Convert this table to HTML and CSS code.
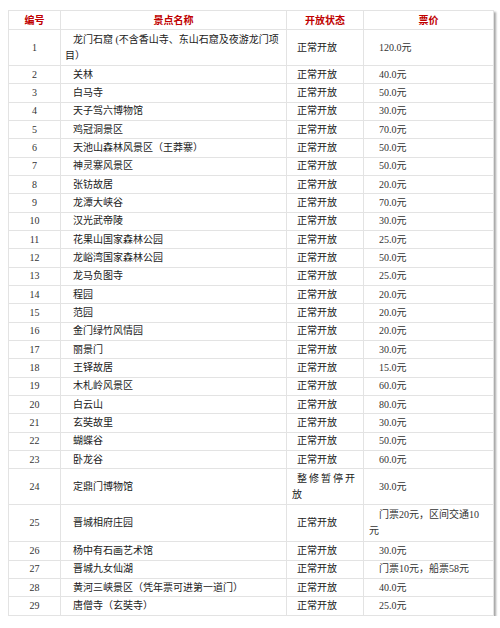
FILE: index.html
```html
<!DOCTYPE html>
<html lang="zh-CN">
<head>
<meta charset="utf-8">
<link rel="stylesheet" href="styles.css">
</head>
<body>
<table class="tickets">
<colgroup><col class="c1"><col class="c2"><col class="c3"><col class="c4"></colgroup>
<thead>
<tr class="head"><th>编号</th><th>景点名称</th><th>开放状态</th><th>票价</th></tr>
</thead>
<tbody>
<tr class="d1"><td class="num">1</td><td class="name">龙门石窟 (不含香山寺、东山石窟及夜游龙门项<br>目）</td><td class="st">正常开放</td><td class="pr">120.0元</td></tr>
<tr><td class="num">2</td><td class="name">关林</td><td class="st">正常开放</td><td class="pr">40.0元</td></tr>
<tr><td class="num">3</td><td class="name">白马寺</td><td class="st">正常开放</td><td class="pr">50.0元</td></tr>
<tr><td class="num">4</td><td class="name">天子驾六博物馆</td><td class="st">正常开放</td><td class="pr">30.0元</td></tr>
<tr><td class="num">5</td><td class="name">鸡冠洞景区</td><td class="st">正常开放</td><td class="pr">70.0元</td></tr>
<tr><td class="num">6</td><td class="name">天池山森林风景区（王莽寨）</td><td class="st">正常开放</td><td class="pr">50.0元</td></tr>
<tr><td class="num">7</td><td class="name">神灵寨风景区</td><td class="st">正常开放</td><td class="pr">50.0元</td></tr>
<tr><td class="num">8</td><td class="name">张钫故居</td><td class="st">正常开放</td><td class="pr">20.0元</td></tr>
<tr><td class="num">9</td><td class="name">龙潭大峡谷</td><td class="st">正常开放</td><td class="pr">70.0元</td></tr>
<tr><td class="num">10</td><td class="name">汉光武帝陵</td><td class="st">正常开放</td><td class="pr">30.0元</td></tr>
<tr><td class="num">11</td><td class="name">花果山国家森林公园</td><td class="st">正常开放</td><td class="pr">25.0元</td></tr>
<tr><td class="num">12</td><td class="name">龙峪湾国家森林公园</td><td class="st">正常开放</td><td class="pr">50.0元</td></tr>
<tr><td class="num">13</td><td class="name">龙马负图寺</td><td class="st">正常开放</td><td class="pr">25.0元</td></tr>
<tr><td class="num">14</td><td class="name">程园</td><td class="st">正常开放</td><td class="pr">20.0元</td></tr>
<tr><td class="num">15</td><td class="name">范园</td><td class="st">正常开放</td><td class="pr">20.0元</td></tr>
<tr><td class="num">16</td><td class="name">金门绿竹风情园</td><td class="st">正常开放</td><td class="pr">20.0元</td></tr>
<tr><td class="num">17</td><td class="name">丽景门</td><td class="st">正常开放</td><td class="pr">30.0元</td></tr>
<tr><td class="num">18</td><td class="name">王铎故居</td><td class="st">正常开放</td><td class="pr">15.0元</td></tr>
<tr><td class="num">19</td><td class="name">木札岭风景区</td><td class="st">正常开放</td><td class="pr">60.0元</td></tr>
<tr><td class="num">20</td><td class="name">白云山</td><td class="st">正常开放</td><td class="pr">80.0元</td></tr>
<tr><td class="num">21</td><td class="name">玄奘故里</td><td class="st">正常开放</td><td class="pr">30.0元</td></tr>
<tr><td class="num">22</td><td class="name">蝴蝶谷</td><td class="st">正常开放</td><td class="pr">50.0元</td></tr>
<tr><td class="num">23</td><td class="name">卧龙谷</td><td class="st">正常开放</td><td class="pr">60.0元</td></tr>
<tr class="d2"><td class="num">24</td><td class="name">定鼎门博物馆</td><td class="st">整修暂停开放</td><td class="pr">30.0元</td></tr>
<tr class="d3"><td class="num">25</td><td class="name">晋城相府庄园</td><td class="st">正常开放</td><td class="pr">门票20元，区间交通10元</td></tr>
<tr><td class="num">26</td><td class="name">杨中有石画艺术馆</td><td class="st">正常开放</td><td class="pr">30.0元</td></tr>
<tr><td class="num">27</td><td class="name">晋城九女仙湖</td><td class="st">正常开放</td><td class="pr">门票10元，船票58元</td></tr>
<tr><td class="num">28</td><td class="name">黄河三峡景区（凭年票可进第一道门）</td><td class="st">正常开放</td><td class="pr">40.0元</td></tr>
<tr><td class="num">29</td><td class="name">唐僧寺（玄奘寺）</td><td class="st">正常开放</td><td class="pr">25.0元</td></tr>
</tbody>
</table>
</body>
</html>
```
FILE: styles.css
```css
html, body {
  margin: 0;
  padding: 0;
  background: #ffffff;
}
body {
  padding: 10px 0 0 8px;
  font-family: "Liberation Serif", "Noto Sans CJK SC", serif;
  font-size: 10px;
  color: #1a1a1a;
}
.tickets {
  border-collapse: collapse;
  table-layout: fixed;
  width: 485px;
  border: 1px solid #d4d4d4;
  box-shadow: 2px 2px 2px rgba(0, 0, 0, 0.35);
}
.c1 { width: 52px; }
.c2 { width: 226px; }
.c3 { width: 77px; }
.c4 { width: 130px; }
.tickets th,
.tickets td {
  border: 1px solid #e3e3e3;
  padding: 0 4px;
  line-height: 16px;
  vertical-align: middle;
  overflow: hidden;
}
.tickets tr { height: 18.33px; }
.tickets tr.head { height: 19px; }
.tickets tr.d1 { height: 36px; }
.tickets tr.d2 { height: 36px; }
.tickets tr.d3 { height: 37px; }
.tickets th {
  color: #c00000;
  font-family: "Noto Sans CJK SC", sans-serif;
  font-weight: bold;
  text-align: center;
}
.num {
  text-align: center;
  color: #333;
}
.name {
  text-indent: 8px;
}
.tickets .st {
  text-align: justify;
  text-indent: 5px;
  padding-left: 5px;
  padding-right: 8px;
}
.tickets .pr {
  text-indent: 10px;
  padding-left: 5px;
  padding-right: 7px;
  color: #333;
}
```
